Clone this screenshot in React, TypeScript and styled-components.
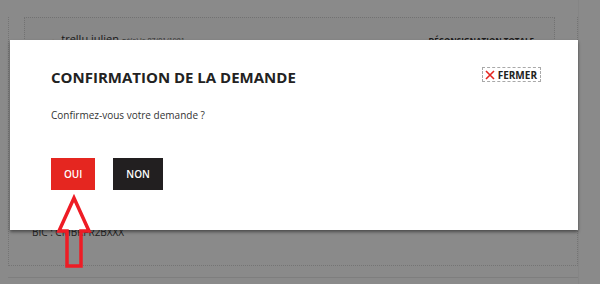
import React from "react";
import styled, { createGlobalStyle } from "styled-components";

const GlobalStyle = createGlobalStyle`
  html, body {
    margin: 0;
    padding: 0;
    background: #fbfbfb;
    font-family: "Open Sans", "Liberation Sans", sans-serif;
    overflow: hidden;
  }
`;

const Page = styled.div`
  width: 600px;
  height: 284px;
  position: relative;
  overflow: hidden;
  background: #fbfbfb;
`;

const Column = styled.div`
  margin-left: 8px;
  width: 571px;
  height: 284px;
  border-right: 1px solid #f2f2f2;
  padding-top: 17px;
  box-sizing: border-box;
`;

const Card = styled.div`
  border: 1px dotted #d4d4d4;
  border-top: none;
  height: 249px;
  box-sizing: border-box;
  padding-left: 15px;
  padding-right: 22px;
`;

const InnerPanel = styled.div`
  border: 1px dotted #d0d0d0;
  background: #f7f7f7;
  height: 200px;
  padding: 13px 20px 0 26px;
  box-sizing: border-box;
  display: flex;
  justify-content: space-between;
  align-items: flex-start;
`;

const Person = styled.div`
  display: flex;
  align-items: baseline;
  gap: 3px;
  font-size: 11px;
  color: #333;
`;

const Bullet = styled.span`
  color: #e08a3c;
  font-size: 7px;
  margin-right: 3px;
`;

const Birth = styled.span`
  font-size: 7px;
  color: #555;
`;

const Status = styled.div`
  font-size: 8px;
  font-weight: 700;
  color: #333;
  margin-top: 4px;
`;

const Bic = styled.div`
  font-size: 10px;
  color: #444;
  margin-top: 8px;
  margin-left: 8px;
`;

const NextCard = styled.div`
  border-top: 1px solid #e6e6e6;
  margin-top: 11px;
`;

const Overlay = styled.div`
  position: absolute;
  inset: 0;
  background: rgba(0, 0, 0, 0.45);
`;

const Modal = styled.div`
  position: absolute;
  left: 10px;
  top: 40px;
  width: 568px;
  height: 190px;
  box-sizing: border-box;
  background: #fff;
  box-shadow: 0 2px 3px rgba(0, 0, 0, 0.45);
  padding: 27px 37px 40px 41px;
  display: flex;
  flex-direction: column;
`;

const Header = styled.div`
  display: flex;
  justify-content: space-between;
  align-items: flex-start;
`;

const Title = styled.h2`
  margin: 0;
  font-size: 15px;
  font-weight: 700;
  color: #222;
  line-height: 20px;
`;

const CloseButton = styled.button`
  display: flex;
  align-items: center;
  gap: 3px;
  border: 1px dashed #a9a9a9;
  background: none;
  padding: 0 3px 0 2px;
  height: 15px;
  font-family: inherit;
  font-size: 10px;
  font-weight: 700;
  color: #222;
  cursor: pointer;
`;

const Message = styled.p`
  margin: 21px 0 0;
  font-size: 10px;
  color: #333;
`;

const Actions = styled.div`
  display: flex;
  gap: 18px;
  margin-top: auto;
`;

const ActionButton = styled.button<{ $variant: "yes" | "no" }>`
  height: 32px;
  padding: 0 13px;
  border: none;
  background: ${(p) => (p.$variant === "yes" ? "#e52620" : "#221f20")};
  color: #fff;
  font-family: inherit;
  font-size: 10px;
  font-weight: 600;
  cursor: pointer;
`;

const Arrow = styled.svg`
  position: absolute;
  left: 55px;
  top: 194px;
`;

const CloseIcon = () => (
  <svg width="10" height="10" viewBox="0 0 10 10">
    <path d="M1 1 L9 9 M9 1 L1 9" stroke="#e52620" strokeWidth="1.6" />
  </svg>
);

const App = () => (
  <Page>
    <GlobalStyle />
    <Column>
      <Card>
        <InnerPanel>
          <Person>
            <Bullet>●</Bullet>
            trellu julien <Birth>né(e) le 07/01/1981</Birth>
          </Person>
          <Status>DÉCONSIGNATION TOTALE</Status>
        </InnerPanel>
        <Bic>BIC : CMBRFR2BXXX</Bic>
      </Card>
      <NextCard />
    </Column>
    <Overlay />
    <Modal>
      <Header>
        <Title>CONFIRMATION DE LA DEMANDE</Title>
        <CloseButton>
          <CloseIcon />
          FERMER
        </CloseButton>
      </Header>
      <Message>Confirmez-vous votre demande ?</Message>
      <Actions>
        <ActionButton $variant="yes">OUI</ActionButton>
        <ActionButton $variant="no">NON</ActionButton>
      </Actions>
    </Modal>
    <Arrow width="40" height="80" viewBox="0 0 40 80">
      <polygon
        points="19,4 4,37 12,37 12,72 26,72 26,37 34,37"
        fill="none"
        stroke="#ee1c25"
        strokeWidth="3.5"
        strokeLinejoin="miter"
      />
    </Arrow>
  </Page>
);

export default App;
